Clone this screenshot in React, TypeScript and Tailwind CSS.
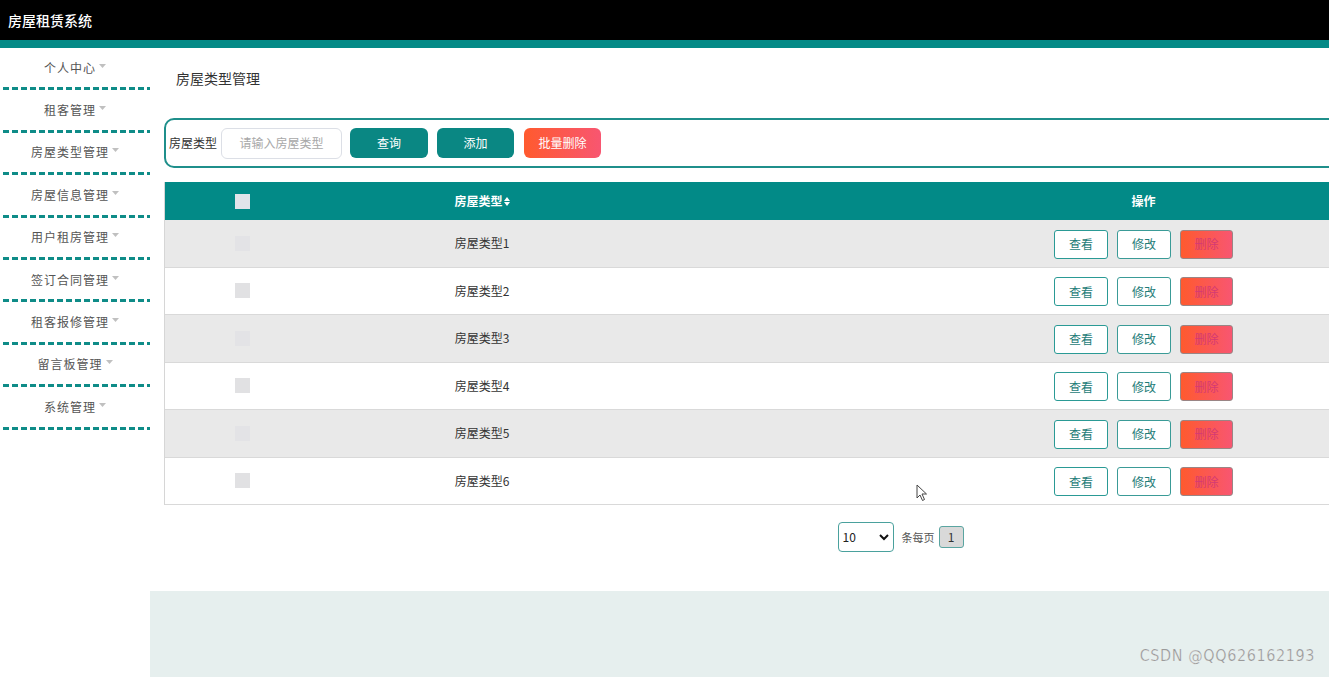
import React from "react";

const menus = ["个人中心", "租客管理", "房屋类型管理", "房屋信息管理", "用户租房管理", "签订合同管理", "租客报修管理", "留言板管理", "系统管理"];
const rows = [1, 2, 3, 4, 5, 6];

function Caret() {
  return (
    <svg width="7" height="4" viewBox="0 0 7 4" className="ml-[3px] mt-[-4px]">
      <path d="M0 0 L7 0 L3.5 4 Z" fill="#c0c0c0" />
    </svg>
  );
}

function SortIcon() {
  return (
    <svg width="6" height="9" viewBox="0 0 6 9" className="ml-[1px]">
      <path d="M0 4 L3 0 L6 4 Z" fill="#ffffff" />
      <path d="M0 5 L6 5 L3 9 Z" fill="#ffffff" />
    </svg>
  );
}

export default function App() {
  const font = { fontFamily: '"Noto Sans CJK SC", "Noto Sans", sans-serif' };
  return (
    <div className="w-[1329px] h-[677px] overflow-hidden bg-white relative" style={font}>
      <div className="h-[40px] bg-black flex items-center pl-[8px] text-white text-[14px] font-medium">房屋租赁系统</div>
      <div className="h-[8px] bg-[#058a87]" />
      <div className="flex h-[629px]">
        <div className="w-[150px] shrink-0">
          {menus.map((m) => (
            <div key={m}>
              <div className="h-[39.4px] flex items-center justify-center text-[12px] text-[#555555] tracking-[1px]">
                <span>{m}</span>
                <Caret />
              </div>
              <div className="ml-[3px] h-[3px] bg-[repeating-linear-gradient(90deg,#0f8c88_0_6px,transparent_6px_9px)]" />
            </div>
          ))}
        </div>
        <div className="flex-1 relative overflow-hidden flex flex-col">
          <div className="pl-[26px] pt-[20px] h-[70px] text-[14px] text-[#333333]">房屋类型管理</div>
          <div className="ml-[14px] w-[1300px] h-[50px] border-2 border-[#1f8f8b] rounded-[10px] flex items-center pl-[3px]">
            <span className="text-[12px] text-[#333333] mr-[4px]">房屋类型</span>
            <div className="w-[121px] h-[31px] border border-[#dcdfe6] rounded-[6px] flex items-center justify-center text-[12px] text-[#a8a8a8]">请输入房屋类型</div>
            <div className="ml-[8px] w-[78px] h-[30px] rounded-[6px] bg-[#0a8783] text-white text-[12px] flex items-center justify-center">查询</div>
            <div className="ml-[9px] w-[77px] h-[30px] rounded-[6px] bg-[#0a8783] text-white text-[12px] flex items-center justify-center">添加</div>
            <div className="ml-[10px] w-[77px] h-[30px] rounded-[6px] bg-[linear-gradient(90deg,#ff5a2e,#f85671)] text-white text-[12px] flex items-center justify-center">批量删除</div>
          </div>
          <div className="ml-[14px] mt-[14px] w-[1478px] border-l border-[#d6d6d6]">
            <div className="h-[38px] bg-[#028a87] flex items-center text-white text-[12px] font-bold">
              <div className="w-[154px] flex justify-center">
                <div className="w-[15px] h-[15px] bg-[#e1e4ea]" />
              </div>
              <div className="w-[326px] flex items-center justify-center">
                房屋类型<SortIcon />
              </div>
              <div className="flex-1 text-center">操作</div>
            </div>
            {rows.map((r) => (
              <div key={r} className={`h-[47.5px] flex items-center text-[12px] text-[#333333] border-b border-[#d9d9d9] ${r % 2 === 1 ? "bg-[#e9e9e9]" : "bg-white"}`}>
                <div className="w-[154px] flex justify-center">
                  <div className={`w-[15px] h-[15px] ${r % 2 === 1 ? "bg-[#e3e3e6]" : "bg-[#e1e1e3]"}`} />
                </div>
                <div className="w-[326px] text-center">房屋类型{r}</div>
                <div className="flex-1 flex justify-center gap-[9px] pt-[2px]">
                  <div className="w-[54px] h-[29px] border border-[#2a9a95] rounded-[3px] bg-white flex items-center justify-center text-[#1e7c78]">查看</div>
                  <div className="w-[54px] h-[29px] border border-[#3a9b97] rounded-[3px] bg-white flex items-center justify-center text-[#1e7c78]">修改</div>
                  <div className="w-[53px] h-[29px] border border-[#9a8585] rounded-[3px] bg-[linear-gradient(90deg,#ff5a2e,#f85671)] flex items-center justify-center text-[#d43a74]">删除</div>
                </div>
              </div>
            ))}
          </div>
          <div className="ml-[14px] w-[1473px] mt-[17px] flex items-center justify-center">
            <div className="w-[56px] h-[30px] border border-[#4aa19d] rounded-[4px] flex items-center justify-between px-[4px] text-[12px] text-[#222222]">
              <span>10</span>
              <svg width="10" height="7" viewBox="0 0 10 7"><path d="M1 1 L5 5 L9 1" stroke="#111" strokeWidth="2" fill="none" /></svg>
            </div>
            <span className="ml-[8px] text-[11px] text-[#555555]">条每页</span>
            <div className="ml-[4px] w-[25px] h-[22px] bg-[#d9d9d9] border border-[#5aa5a1] rounded-[3px] flex items-center justify-center text-[12px] text-[#333333]">1</div>
          </div>
          <div className="mt-[39px] flex-1 bg-[#e6efee]" />
          <div className="absolute left-[766px] top-[436px]">
            <svg width="12" height="18" viewBox="0 0 12 18">
              <path d="M1 1 L1 14 L4 11 L6.5 16.5 L8.5 15.5 L6 10 L10.5 10 Z" fill="#ffffff" stroke="#444" strokeWidth="1" strokeLinejoin="round" />
            </svg>
          </div>
          <div className="absolute right-[14px] bottom-[9px] text-[16px] text-[#9a9a9a] tracking-[0.6px]" style={{ fontFamily: '"DejaVu Sans Condensed", "Liberation Sans", sans-serif', WebkitTextStroke: "0.2px #ffffff" }}>CSDN @QQ626162193</div>
        </div>
      </div>
    </div>
  );
}
